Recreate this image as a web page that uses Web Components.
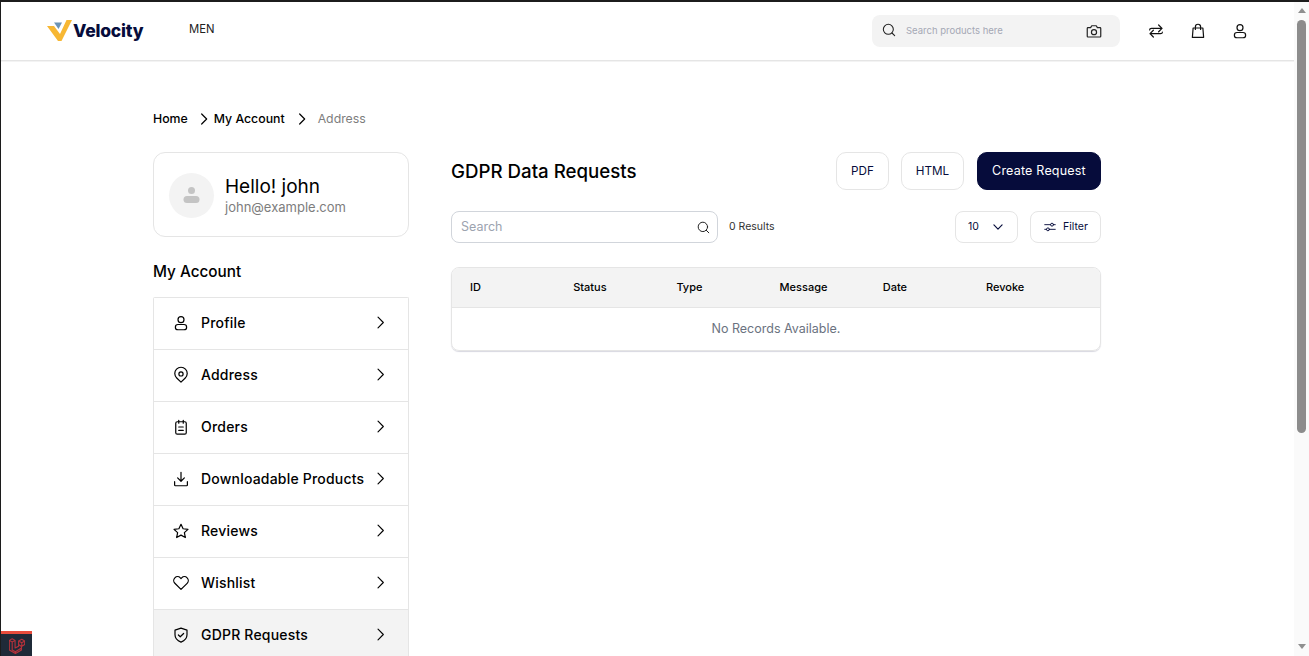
<!DOCTYPE html>
<html lang="en">
<head>
<meta charset="utf-8">
<title>GDPR Data Requests</title>
<style>
  html, body { margin: 0; height: 100%; overflow: hidden; background: #fff; }
  body { font-family: Inter, "Noto Sans", "Liberation Sans", sans-serif; color: #000; }
</style>
</head>
<body>
<app-shell>
  <store-header></store-header>
  <page-body>
    <bread-crumbs slot="crumbs"></bread-crumbs>
    <account-sidebar slot="side"></account-sidebar>
    <gdpr-panel slot="main"></gdpr-panel>
  </page-body>
</app-shell>
<debug-badge></debug-badge>

<script>
const icon = (name, size = 20, sw = 1.6) => {
  const paths = {
    search: `<circle cx="11" cy="11" r="7.5"/><path d="M16.5 16.5 20.5 20.5"/>`,
    camera: `<path d="M4 7.5h3.5L9 5h6l1.5 2.5H20a1 1 0 0 1 1 1V19a1 1 0 0 1-1 1H4a1 1 0 0 1-1-1V8.5a1 1 0 0 1 1-1z"/><circle cx="12" cy="13.5" r="3.4"/>`,
    compare: `<path d="M3.5 10.5c0-1.5 1-2 2.5-2H20M15.5 4 20 8.5 15.5 13M20.5 13.5c0 1.5-1 2-2.5 2H4M8.5 11 4 15.5 8.5 20"/>`,
    bag: `<path d="M5.5 8h13l1 12.5h-15zM8.5 10V6.5a3.5 3.5 0 0 1 7 0V10"/>`,
    user: `<circle cx="12" cy="7.5" r="4"/><rect x="4.5" y="14" width="15" height="7" rx="3.5"/>`,
    pin: `<path d="M12 21.5 6.3 16A8.3 8.3 0 1 1 17.7 16z"/><circle cx="12" cy="10.5" r="2.8"/>`,
    orders: `<rect x="5" y="5" width="14" height="16.5" rx="2"/><path d="M9 3v4M15 3v4M9 12h6M9 16.5h6"/>`,
    download: `<path d="M12 3v12M7.5 10.5 12 15l4.5-4.5M3.5 15.5V20a1 1 0 0 0 1 1h15a1 1 0 0 0 1-1v-4.5"/>`,
    star: `<path d="m12 3 2.8 6 6.5.8-4.8 4.4 1.3 6.5L12 17.5l-5.8 3.200 1.3-6.5-4.8-4.4 6.5-.8z"/>`,
    heart: `<path d="M12 20.5 3.8 12.4a5.2 5.2 0 0 1 0-7.3 5.2 5.2 0 0 1 7.3 0l.9.9.9-.9a5.2 5.2 0 0 1 7.3 0 5.2 5.2 0 0 1 0 7.3z"/>`,
    shield: `<path d="M12 2.8 20 5.5v6.3c0 4.6-3.2 8-8 9.700-4.8-1.7-8-5.1-8-9.7V5.5z"/><path d="m8.5 12 2.5 2.4 4.5-4.4"/>`,
    chevron: `<path d="m8.5 4.5 7.5 7.5-7.5 7.5"/>`,
    down: `<path d="m5 8.5 7 7 7-7"/>`,
    sliders: `<path d="M3 8h10M18 8h3M3 16h3M11 16h10"/><circle cx="15.5" cy="8" r="2.5"/><circle cx="8.5" cy="16" r="2.5"/>`
  };
  return `<svg width="${size}" height="${size}" viewBox="0 0 24 24" fill="none" stroke="currentColor" stroke-width="${sw}" stroke-linecap="round" stroke-linejoin="round" aria-hidden="true">${paths[name]}</svg>`;
};

class AppShell extends HTMLElement {
  constructor() {
    super();
    this.attachShadow({ mode: "open" });
    this.shadowRoot.innerHTML = `
    <style>
      :host { display: flex; height: 656px; box-sizing: border-box; border-top: 2px solid #1c1c1c; border-left: 1px solid #1c1c1c; overflow: hidden; }
      .page { flex: 1; min-width: 0; overflow: hidden; }
      fake-scrollbar { flex: none; }
    </style>
    <div class="page"><slot></slot></div>
    <fake-scrollbar></fake-scrollbar>`;
  }
}

class FakeScrollbar extends HTMLElement {
  constructor() {
    super();
    this.attachShadow({ mode: "open" });
    this.shadowRoot.innerHTML = `
    <style>
      :host { display: flex; flex-direction: column; align-items: center; width: 15px; background: #fafafa; height: 654px; }
      .up, .down { width: 0; height: 0; border-left: 4.5px solid transparent; border-right: 4.5px solid transparent; }
      .up { border-bottom: 5px solid #8f8f8f; margin-top: 6px; }
      .thumb { width: 9px; height: 413px; margin-top: 7px; background: #8c8c8c; border-radius: 5px; }
      .down { border-top: 5px solid #8f8f8f; margin-top: auto; margin-bottom: 7px; }
    </style>
    <div class="up"></div><div class="thumb"></div><div class="down"></div>`;
  }
}

class StoreHeader extends HTMLElement {
  constructor() {
    super();
    this.attachShadow({ mode: "open" });
    this.shadowRoot.innerHTML = `
    <style>
      :host { display: flex; align-items: center; height: 58px; padding: 0 45px 0 46px; border-bottom: 1px solid #e5e5e5; box-shadow: 0 1px 0 #f3f3f3; color: #060c3b; }
      .logo { display: flex; align-items: center; width: 142px; font: 800 17.5px/1 Inter, sans-serif; letter-spacing: -.2px; }
      .men { font: 400 11.3px/1 Inter, sans-serif; color: #222; margin-bottom: 2px; }
      .search { margin-left: auto; width: 248px; height: 32px; box-sizing: border-box; padding: 0 17px 0 8.5px; background: #f3f3f3; border-radius: 8px; display: flex; align-items: center; color: #222; }
      .search span { flex: 1; margin-left: 9.5px; font: 400 9.5px/1 Inter, sans-serif; color: #a5a8b5; }
      .search svg:first-child { margin-bottom: 2px; }
      .actions { display: flex; gap: 24px; margin-left: 27px; color: #111; }
      .actions svg, .search svg { display: block; }
    </style>
    <div class="logo">
      <svg width="26" height="24" viewBox="0 0 26 24"><path d="M0 7h7l6 8L19.5 1H25L14.5 22h-3.5z" fill="#f7b733"/><path d="M7 3.5h8L11.5 10z" fill="#6d94b5"/></svg>
      <span>Velocity</span>
    </div>
    <div class="men">MEN</div>
    <div class="search">${icon("search", 16)}<span>Search products here</span>${icon("camera", 18)}</div>
    <div class="actions">${icon("compare", 18)}${icon("bag", 18)}${icon("user", 18)}</div>`;
  }
}

class PageBody extends HTMLElement {
  constructor() {
    super();
    this.attachShadow({ mode: "open" });
    this.shadowRoot.innerHTML = `
    <style>
      :host { display: block; padding: 47px 0 0 152px; }
      .cols { display: grid; grid-template-columns: 256px 650px; column-gap: 42px; margin-top: 24px; align-items: start; }
    </style>
    <slot name="crumbs"></slot>
    <div class="cols"><slot name="side"></slot><slot name="main"></slot></div>`;
  }
}

class BreadCrumbs extends HTMLElement {
  constructor() {
    super();
    this.attachShadow({ mode: "open" });
    this.shadowRoot.innerHTML = `
    <style>
      :host { display: flex; align-items: center; height: 20px; font: 500 12.3px/20px Inter, sans-serif; color: #000; }
      span { padding-top: 1px; }
      svg { display: block; }
      .a { margin-left: 8px; margin-right: 2px; }
      .b { margin-left: 9px; margin-right: 8px; }
      .now { font-weight: 400; color: #7d7d7d; }
    </style>
    <span>Home</span><span class="a">${icon("chevron", 16, 1.8)}</span><span>My Account</span><span class="b">${icon("chevron", 16, 1.8)}</span><span class="now">Address</span>`;
  }
}

class ProfileCard extends HTMLElement {
  constructor() {
    super();
    this.attachShadow({ mode: "open" });
    this.shadowRoot.innerHTML = `
    <style>
      :host { display: flex; align-items: center; gap: 11px; height: 85px; box-sizing: border-box; padding: 0 15px; border: 1px solid #e5e5e5; border-radius: 12px; }
      .avatar { width: 45px; height: 45px; border-radius: 50%; background: #f3f3f3; display: flex; align-items: center; justify-content: center; margin-top: 1px; }
      .hello { font: 400 19px/24px Inter, sans-serif; color: #000; padding-top: 1px; }
      .mail { font: 400 13px/16px Inter, sans-serif; color: #7d7d7d; }
    </style>
    <div class="avatar"><svg width="17" height="18" viewBox="0 0 17 18" fill="#c4c4c4"><circle cx="8.5" cy="4.5" r="3.5"/><rect x="0.5" y="10" width="16" height="7" rx="3.5"/></svg></div>
    <div><div class="hello">Hello! john</div><div class="mail">john@example.com</div></div>`;
  }
}

class MenuItem extends HTMLElement {
  constructor() {
    super();
    this.attachShadow({ mode: "open" });
  }
  connectedCallback() {
    this.shadowRoot.innerHTML = `
    <style>
      :host { display: flex; align-items: center; height: 49px; padding: 0 19px 2px 17.5px; font: 500 14px/20px Inter, sans-serif; letter-spacing: .2px; color: #000; background: #fff; }
      :host([active]) { background: #f3f3f3; }
      svg { display: block; flex: none; }
      .label { flex: 1; margin-left: 11.5px; white-space: nowrap; }
    </style>
    ${icon(this.getAttribute("icon"), 18)}<span class="label"><slot></slot></span>${icon("chevron", 17, 1.6)}`;
  }
}

class AccountSidebar extends HTMLElement {
  constructor() {
    super();
    this.attachShadow({ mode: "open" });
    this.shadowRoot.innerHTML = `
    <style>
      :host { display: block; }
      h2 { margin: 23px 0 13px; font: 500 15.3px/24px Inter, sans-serif; color: #000; }
      .menu { border: 1px solid #e5e5e5; border-bottom: 0; border-radius: 2px 2px 0 0; display: flex; flex-direction: column; }
      menu-item + menu-item { border-top: 1px solid #e5e5e5; }
    </style>
    <profile-card></profile-card>
    <h2>My Account</h2>
    <div class="menu">
      <menu-item icon="user">Profile</menu-item>
      <menu-item icon="pin">Address</menu-item>
      <menu-item icon="orders">Orders</menu-item>
      <menu-item icon="download">Downloadable Products</menu-item>
      <menu-item icon="star">Reviews</menu-item>
      <menu-item icon="heart">Wishlist</menu-item>
      <menu-item icon="shield" active>GDPR Requests</menu-item>
    </div>`;
  }
}

class GdprPanel extends HTMLElement {
  constructor() {
    super();
    this.attachShadow({ mode: "open" });
    this.shadowRoot.innerHTML = `
    <style>
      :host { display: block; }
      .head, .tools { display: flex; align-items: center; }
      .head { height: 38px; gap: 12px; }
      h1 { margin: 2px auto 0 0; font: 500 18.7px/28px Inter, sans-serif; color: #000; }
      .btn { box-sizing: border-box; height: 38px; padding-top: 1px; display: flex; align-items: center; justify-content: center; border: 1px solid #e5e5e5; border-radius: 10px; font: 400 11.7px/1 Inter, sans-serif; color: #060c3b; background: #fff; }
      .pdf { width: 53px; } .html { width: 63px; }
      .create { width: 124px; margin-left: 1px; background: #060c3b; border-color: #060c3b; color: #fff; font-size: 12.5px; letter-spacing: .2px; }
      .tools { height: 32px; margin-top: 21px; }
      .search { box-sizing: border-box; width: 267px; height: 32px; padding: 0 6.5px 0 9px; display: flex; align-items: center; justify-content: space-between; border: 1px solid #d1d5db; border-radius: 8px; font: 400 12.5px/1 Inter, sans-serif; color: #9ca3af; }
      .search span, .box span { padding-top: 1px; }
      .search svg { color: #222; }
      .count { margin-left: 11px; margin-right: auto; padding-top: 1px; font: 400 10.5px/1 Inter, sans-serif; color: #333; }
      .box { box-sizing: border-box; height: 32px; display: flex; align-items: center; border: 1px solid #e5e5e5; border-radius: 8px; font: 400 10.5px/1 Inter, sans-serif; color: #060c3b; }
      .select { width: 63px; padding: 0 12px; justify-content: space-between; }
      .filter { width: 71px; margin-left: 12px; justify-content: center; gap: 6px; }
      svg { display: block; }
      data-table { margin-top: 24px; }
    </style>
    <div class="head">
      <h1>GDPR Data Requests</h1>
      <div class="btn pdf">PDF</div><div class="btn html">HTML</div><div class="btn create">Create Request</div>
    </div>
    <div class="tools">
      <div class="search"><span>Search</span>${icon("search", 15)}</div>
      <span class="count">0 Results</span>
      <div class="box select"><span>10</span>${icon("down", 14, 2)}</div>
      <div class="box filter">${icon("sliders", 14)}<span>Filter</span></div>
    </div>
    <data-table></data-table>`;
  }
}

class DataTable extends HTMLElement {
  constructor() {
    super();
    this.attachShadow({ mode: "open" });
    const cols = ["ID", "Status", "Type", "Message", "Date", "Revoke"];
    this.shadowRoot.innerHTML = `
    <style>
      :host { display: block; box-sizing: border-box; height: 84px; border: 1px solid #e5e5e5; border-radius: 8px; overflow: hidden; box-shadow: 0 1px 1px #d8d8e0; }
      .row { display: grid; grid-template-columns: repeat(6, 103.2px); padding-left: 18px; height: 39px; align-items: center; background: #f3f3f3; border-bottom: 1px solid #e5e5e5; font: 500 11px/1 Inter, sans-serif; color: #000; }
      .empty { height: 42px; display: flex; align-items: center; justify-content: center; font: 400 12.5px/1 Inter, sans-serif; color: #6b7280; }
    </style>
    <div class="row">${cols.map(c => `<span>${c}</span>`).join("")}</div>
    <div class="empty">No Records Available.</div>`;
  }
}

class DebugBadge extends HTMLElement {
  constructor() {
    super();
    this.attachShadow({ mode: "open" });
    this.shadowRoot.innerHTML = `
    <style>
      :host { position: fixed; left: 1px; bottom: 0; width: 31px; height: 25px; box-sizing: border-box; border-top: 3px solid #e74c3c; background: #1f2a38; display: flex; align-items: center; justify-content: center; }
    </style>
    <svg width="16" height="17" viewBox="0 0 50 52" fill="none" stroke="#b5313a" stroke-width="3.5" stroke-linejoin="round"><path d="M1 10 10 5l9 5v24l11-6V12l10-5.5L49 12v11l-10 6v11L20 51 1 40zM1 10l9 5 9-5M10 15v25l10 5.5L39 34M20 51v-5.5M30 12l10 5.5L49 12M40 17.5V29M30 23l9 6"/></svg>`;
  }
}

customElements.define("app-shell", AppShell);
customElements.define("fake-scrollbar", FakeScrollbar);
customElements.define("store-header", StoreHeader);
customElements.define("page-body", PageBody);
customElements.define("bread-crumbs", BreadCrumbs);
customElements.define("profile-card", ProfileCard);
customElements.define("menu-item", MenuItem);
customElements.define("account-sidebar", AccountSidebar);
customElements.define("gdpr-panel", GdprPanel);
customElements.define("data-table", DataTable);
customElements.define("debug-badge", DebugBadge);
</script>
</body>
</html>
